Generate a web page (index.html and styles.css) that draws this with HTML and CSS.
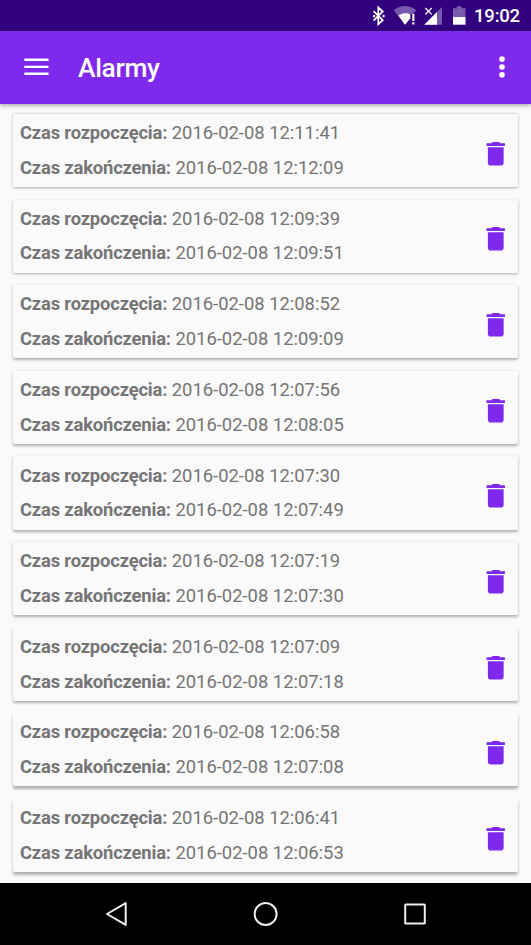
FILE: index.html
```
<!DOCTYPE html>
<html lang="pl">
<head>
<meta charset="utf-8">
<title>Alarmy</title>
<link rel="stylesheet" href="styles.css">
</head>
<body>
<div class="status">
  <svg class="status-icons" width="100" height="31" viewBox="370 0 100 31">
    <path d="M373.5 11.2l9.2 9-4.4 4V7.6l4.400 4-9.2 9" fill="none" stroke="#fff" stroke-width="1.8"/>
    <path d="M373 15h2.2v2.2H373zM382.6 15h2v2.2h-2z" fill="#fff"/>
    <path d="M393.8 10.2Q405 2 416.200 10.2L413 14.2h-3.4v4.2L405 24.6z" fill="#fff" opacity=".35"/>
    <path d="M398.4 15.5Q405 11 410.3 14.5v3.8L405 24.8z" fill="#fff"/>
    <path d="M412.3 14h2.1v7h-2.1zM412.3 22.3h2.1v2.3h-2.1z" fill="#fff"/>
    <path d="M442 7v17.7h-17.7z" fill="#fff" opacity=".35"/>
    <path d="M437 12v12.7h-12.7z" fill="#fff"/>
    <path d="M425.3 8l6.4 6.4m0-6.4l-6.4 6.4" stroke="#fff" stroke-width="1.3"/>
    <path d="M453 8.2h3.8V6.3h4.8v1.9h3.9V17H453z" fill="#fff" opacity=".35"/>
    <path d="M453 17h12.5v7.7H453z" fill="#fff"/>
  </svg>
  <span class="clock">19:02</span>
</div>
<header class="toolbar">
  <svg class="menu" width="25" height="18" viewBox="0 0 25 18"><path d="M.3 1.7h24.2M.3 8.9h24.2M.3 15.8h24.2" stroke="#fff" stroke-width="2.4"/></svg>
  <h1>Alarmy</h1>
  <svg class="more" width="6" height="22" viewBox="0 0 6 22" fill="#fff"><circle cx="3" cy="3.1" r="2.8"/><circle cx="3" cy="11" r="2.8"/><circle cx="3" cy="18.8" r="2.8"/></svg>
</header>
<main class="list" id="list"></main>
<nav class="nav">
  <svg width="531" height="62" viewBox="0 883 531 62" fill="none" stroke="#eee" stroke-width="2" stroke-linejoin="round">
    <path d="M107 914l18.7-10.9v21.8z"/>
    <circle cx="265.6" cy="914" r="11"/>
    <rect x="405.2" y="904.4" width="19.6" height="19.2" rx=".5"/>
  </svg>
</nav>
<script src="app.js"></script>
</body>
</html>
```
FILE: styles.css
```
* { box-sizing: border-box; }
body {
  margin: 0;
  width: 531px;
  height: 945px;
  overflow: hidden;
  display: flex;
  flex-direction: column;
  background: #fafafa;
  font-family: Roboto, sans-serif;
}
.status {
  height: 31px;
  flex: none;
  display: flex;
  align-items: center;
  justify-content: flex-end;
  gap: 4px;
  padding-right: 11px;
  background: #32007e;
  color: #fff;
}
.clock {
  font-size: 18.5px;
  font-weight: 500;
  line-height: 31px;
  padding-top: 1px;
  letter-spacing: -.2px;
  width: 46px;
}
.toolbar {
  height: 72.5px;
  flex: none;
  display: flex;
  align-items: center;
  padding: 0 26px 0 24px;
  background: #7f29ed;
  color: #fff;
  box-shadow: 0 1px 5px rgba(0, 0, 0, .4);
  z-index: 1;
}
.toolbar h1 {
  flex: 1;
  margin: 0 0 0 29px;
  padding-top: 1px;
  font-size: 26.4px;
  font-weight: 500;
  letter-spacing: -.35px;
  line-height: 72px;
}
.list {
  flex: 1;
  min-height: 0;
  display: flex;
  flex-direction: column;
  gap: 12.6px;
  padding: 10.4px 12.7px 0 13px;
}
.card {
  height: 73.05px;
  flex: none;
  display: flex;
  align-items: center;
  justify-content: space-between;
  padding: 0 6.5px 0 7px;
  border-radius: 2px;
  background: #fafafa;
  color: #757575;
}
.card p {
  margin: 0;
  font-size: 18.4px;
  line-height: 34.7px;
  white-space: nowrap;
}
.card p:first-child { padding-top: .5px; }
.card b {
  font-weight: 700;
  letter-spacing: -.18px;
}
.trash { margin-top: 6px; fill: #7f29ed; }
.nav {
  height: 62px;
  flex: none;
  background: #000;
  z-index: 1;
}
.nav svg { display: block; }
```
FILE: app.js
```
const alarms = [
  ["12:11:41", "12:12:09"],
  ["12:09:39", "12:09:51"],
  ["12:08:52", "12:09:09"],
  ["12:07:56", "12:08:05"],
  ["12:07:30", "12:07:49"],
  ["12:07:19", "12:07:30"],
  ["12:07:09", "12:07:18"],
  ["12:06:58", "12:07:08"],
  ["12:06:41", "12:06:53"]
];
// Elevation shadows fall further the lower a card sits on the screen.
document.getElementById("list").innerHTML = alarms.map(([start, end], i) => `
  <section class="card" style="box-shadow: 0 ${(0.8 + i * 0.2).toFixed(2)}px 3px rgba(0,0,0,.3)">
    <div>
      <p><b>Czas rozpoczęcia:</b> 2016-02-08 ${start}</p>
      <p><b>Czas zakończenia:</b> 2016-02-08 ${end}</p>
    </div>
    <svg class="trash" width="31.5" height="31.5" viewBox="0 0 24 24"><path d="M6 19c0 1.1.9 2 2 2h8c1.1 0 2-.9 2-2V7H6v12zM19 4h-3.500l-1-1h-5l-1 1H5v2h14V4z"/></svg>
  </section>`).join("");
```
